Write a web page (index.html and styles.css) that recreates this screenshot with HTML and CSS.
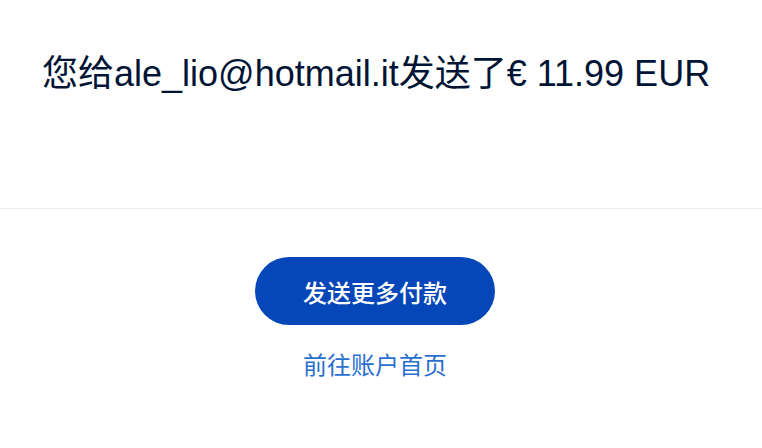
FILE: index.html
```html
<!DOCTYPE html>
<html lang="zh-CN">
<head>
<meta charset="utf-8">
<link rel="stylesheet" href="styles.css">
</head>
<body>
<main class="page">
  <section class="header">
    <h1 class="title">您给ale_lio@hotmail.it发送了€ 11.99 EUR</h1>
  </section>
  <section class="actions">
    <a class="btn" href="#">发送更多付款</a>
    <a class="link" href="#">前往账户首页</a>
  </section>
</main>
</body>
</html>
```
FILE: styles.css
```css
html, body {
  margin: 0;
  padding: 0;
  background: #ffffff;
}
body {
  font-family: "Liberation Sans", "Noto Sans CJK SC", sans-serif;
  color: #001435;
}
.header {
  height: 209px;
  box-sizing: border-box;
  padding: 48px 0 0 42px;
  border-bottom: 1px solid #ececec;
}
.title {
  margin: 0;
  font-size: 36px;
  font-weight: 400;
  line-height: 52px;
  color: #001435;
}
.actions {
  display: flex;
  flex-direction: column;
  align-items: center;
  padding: 48px 12px 0 0;
}
.btn {
  display: flex;
  align-items: center;
  justify-content: center;
  width: 240px;
  height: 68px;
  border-radius: 34px;
  background: #0546b8;
  color: #ffffff;
  font-size: 24px;
  font-weight: 500;
  text-decoration: none;
}
.link {
  margin-top: 24px;
  font-size: 24px;
  line-height: 34px;
  color: #2a6fd0;
  text-decoration: none;
}
```
